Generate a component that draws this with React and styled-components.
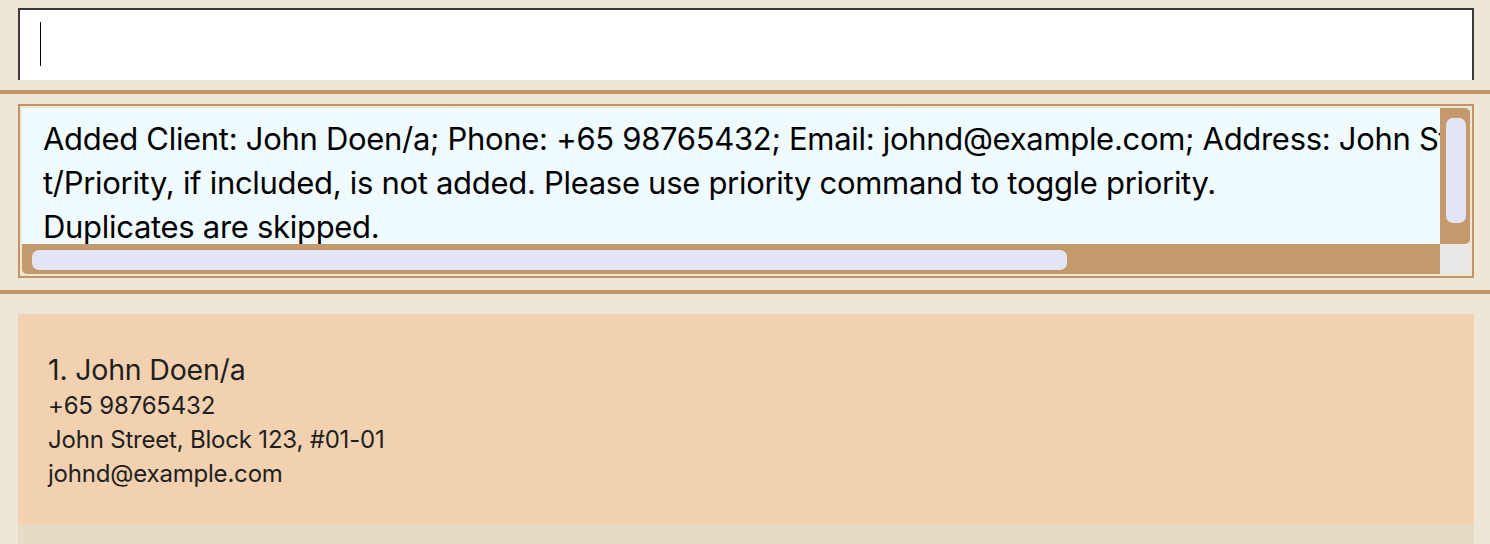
import React from "react";
import styled, { createGlobalStyle } from "styled-components";

const Global = createGlobalStyle`
  html, body { margin: 0; padding: 0; }
  body {
    background: #efe7d5;
    font-family: Inter, "Noto Sans", sans-serif;
    overflow: hidden;
  }
`;

const Page = styled.div`
  width: 1490px;
  height: 544px;
  overflow: hidden;
  background: #efe7d5;
  display: flex;
  flex-direction: column;
  & > * { flex-shrink: 0; }
`;

const CommandSection = styled.div`
  padding: 8px 16px 10px 18px;
`;

const CommandBox = styled.div`
  background: #ffffff;
  border: 2px solid #383838;
  border-bottom: none;
  display: flex;
  align-items: flex-start;
  padding: 12px 0 0 20px;
  box-sizing: border-box;
  height: 72px;
`;

const Caret = styled.span`
  display: block;
  width: 1px;
  height: 44px;
  background: #000;
`;

const Divider = styled.div`
  height: 4px;
  background: #c29364;
`;

const ResultSection = styled.div`
  padding: 10px 16px 12px 18px;
`;

const ResultFrame = styled.div`
  border: 2px solid #c29364;
  padding: 2px;
  height: 174px;
  box-sizing: border-box;
  display: grid;
  grid-template-columns: 1fr 30px;
  grid-template-rows: 1fr 30px;
`;

const Viewport = styled.div`
  background: #f0fbff;
  overflow: hidden;
  padding: 9px 0 0 21px;
  font-size: 31px;
  letter-spacing: -0.3px;
  line-height: 44px;
  color: #000;
  white-space: pre;
`;

const Track = styled.div`
  background: #c49a6d;
  display: flex;
  border-radius: ${(p) => p.$radius};
  padding: ${(p) => p.$pad};
`;

const Thumb = styled.div`
  background: #e4e4f9;
  border-radius: 7px;
  width: ${(p) => p.$w};
  height: ${(p) => p.$h};
`;

const Corner = styled.div`
  background: #e8e8e8;
`;

const ListSection = styled.div`
  padding: 20px 16px 0 18px;
  display: flex;
  flex-direction: column;
`;

const Card = styled.div`
  background: #f2d1b0;
  height: 210px;
  box-sizing: border-box;
  padding: 37px 30px 0 30px;
  color: #1f1f1f;
`;

const Name = styled.div`
  font-size: 28.5px;
  letter-spacing: -0.2px;
  line-height: 38px;
`;

const Detail = styled.div`
  font-size: 24px;
  letter-spacing: -0.2px;
  line-height: 34px;
`;

const NextRow = styled.div`
  background: #e6dbc5;
  height: 40px;
`;

export default function App() {
  return (
    <Page>
      <Global />
      <CommandSection>
        <CommandBox>
          <Caret />
        </CommandBox>
      </CommandSection>
      <Divider />
      <ResultSection>
        <ResultFrame>
          <Viewport>
            {"Added Client: John Doen/a; Phone: +65 98765432; Email: johnd@example.com; Address: John Street, Block 123, #01-01\nt/Priority, if included, is not added. Please use priority command to toggle priority.\nDuplicates are skipped."}
          </Viewport>
          <Track $radius="0 5px 5px 0" $pad="10px 4px 21px 6px">
            <Thumb $w="20px" $h="105px" />
          </Track>
          <Track $radius="0 0 0 5px" $pad="6px 0 4px 10px">
            <Thumb $w="1035px" $h="20px" />
          </Track>
          <Corner />
        </ResultFrame>
      </ResultSection>
      <Divider />
      <ListSection>
        <Card>
          <Name>1. John Doen/a</Name>
          <Detail>+65 98765432</Detail>
          <Detail>John Street, Block 123, #01-01</Detail>
          <Detail>johnd@example.com</Detail>
        </Card>
        <NextRow />
      </ListSection>
    </Page>
  );
}
